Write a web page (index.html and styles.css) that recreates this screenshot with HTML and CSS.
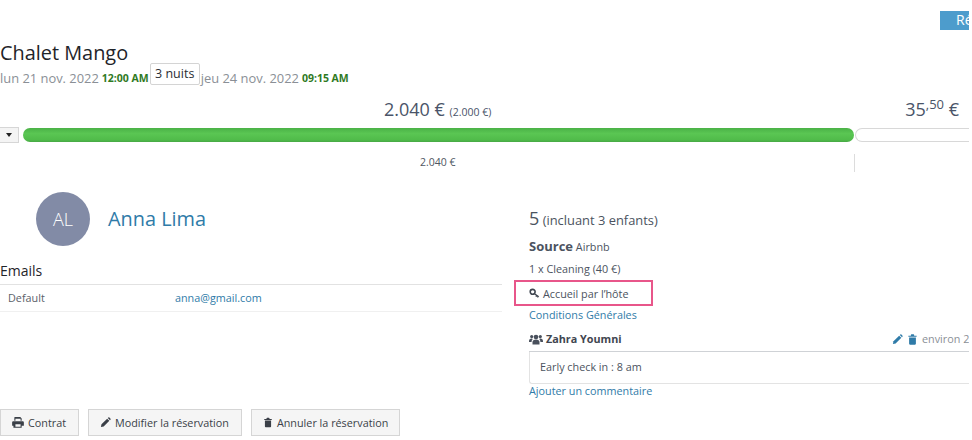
FILE: index.html
```html
<!DOCTYPE html>
<html lang="fr">
<head>
<meta charset="utf-8">
<title>Chalet Mango</title>
<link rel="stylesheet" href="styles.css">
</head>
<body>
<div class="page">
  <div class="topbar"><span class="top-btn">Réserver</span></div>
  <h1 class="title">Chalet Mango</h1>
  <div class="dates">
    <span>lun 21 nov. 2022</span> <b class="time">12:00 AM</b><span class="nights">3 nuits</span><span>jeu 24 nov. 2022</span> <b class="time">09:15 AM</b>
  </div>
  <div class="prices">
    <div class="price-main">2.040 € <small>(2.000 €)</small></div>
    <div class="price-extra">35<sup>,50</sup> €</div>
  </div>
  <div class="bar-row">
    <button class="caret" aria-label="menu"><span class="caret-glyph"></span></button>
    <div class="bar-green"></div>
    <div class="bar-empty"></div>
  </div>
  <div class="labels">
    <div class="label-main">2.040 €</div>
    <div class="label-rest"></div>
  </div>
  <div class="columns">
    <div class="left">
      <div class="guest">
        <div class="avatar">AL</div>
        <a class="guest-name">Anna Lima</a>
      </div>
      <h2 class="emails-title">Emails</h2>
      <div class="email-row">
        <span class="email-type">Default</span>
        <a class="link">anna@gmail.com</a>
      </div>
    </div>
    <div class="right">
      <div class="people"><span class="people-n">5</span> (incluant 3 enfants)</div>
      <div class="source"><b>Source</b> Airbnb</div>
      <div class="line">1 x Cleaning (40 €)</div>
      <div class="highlight">
        <svg class="ico" viewBox="0 0 12 12"><circle cx="4" cy="4.200" r="2.700" fill="none" stroke="#3f4650" stroke-width="1.700"/><path d="M6 6.200l4.600 3.400M8.400 8l-.9 1.300M10 9.200l-.8 1.100" fill="none" stroke="#3f4650" stroke-width="1.500"/></svg>
        <span>Accueil par l’hôte</span>
      </div>
      <a class="link line conditions">Conditions Générales</a>
      <div class="comment-head">
        <span class="author">
          <svg class="ico users" viewBox="0 0 14 11"><g fill="#49505c"><circle cx="7" cy="3" r="2.300"/><circle cx="2.700" cy="2.600" r="1.600"/><circle cx="11.300" cy="2.600" r="1.600"/><path d="M3.500 10.500V8c0-1.800 1.300-2.600 3.500-2.600s3.500.8 3.500 2.600v2.500z"/><path d="M0 7.500c0-2 1-2.900 2.600-2.900.6 0 1 .2 1.300.4-.9.7-1.300 1.700-1.300 3H0zM14 7.500c0-2-1-2.900-2.600-2.900-.6 0-1 .2-1.300.4.900.7 1.300 1.700 1.300 3H14z"/></g></svg>
          <b>Zahra Youmni</b>
        </span>
        <span class="meta">
          <svg class="ico" viewBox="0 0 12 12"><path class="blue" d="M1 11l.6-3L7.800 1.800l2.400 2.400L4 10.400z"/><path class="blue" d="M8.500 1.100l.7-.6c.3-.3.700-.3 1 0l1.300 1.300c.3.300.3.700 0 1l-.6.700z"/></svg>
          <svg class="ico" viewBox="0 0 12 12"><path class="blue" d="M4.200 1.800V1c0-.4.300-.7.700-.7h2.200c.4 0 .7.300.7.700v.8H10.500v1.200h-9V1.800zM2.300 3.700h7.400v7c0 .5-.4.900-.9.900H3.200c-.5 0-.9-.4-.9-.9z"/></svg>
          <span class="ago">environ 2 jours</span>
        </span>
      </div>
      <div class="comment">Early check in : 8 am</div>
      <a class="link add">Ajouter un commentaire</a>
    </div>
  </div>
  <div class="actions">
    <button class="btn btn-print">
      <svg class="ico" viewBox="0 0 13 12"><path fill="#3a3f47" d="M3 0h6l1.500 1.500V4H9.300V2H3.700v2H2.500V.5zM1.500 4.500h10c.8 0 1.400.6 1.400 1.400V9.500h-2.400v2.300h-9V9.500H.1V5.900c0-.8.600-1.400 1.400-1.400zM3.700 8v2.600h5.600V8z"/></svg>
      Contrat
    </button>
    <button class="btn">
      <svg class="ico" viewBox="0 0 12 12"><path fill="#3a3f47" d="M1 11l.6-3L7.800 1.800l2.400 2.400L4 10.400zM8.500 1.100l.7-.6c.3-.3.700-.3 1 0l1.300 1.300c.3.300.3.700 0 1l-.6.700z"/></svg>
      Modifier la réservation
    </button>
    <button class="btn btn-trash">
      <svg class="ico" viewBox="0 0 12 12"><path fill="#3a3f47" d="M4.200 1.800V1c0-.4.300-.7.700-.7h2.200c.4 0 .7.300.7.700v.8H10.500v1.200h-9V1.800zM2.300 3.700h7.400v7c0 .5-.4.900-.9.900H3.200c-.5 0-.9-.4-.9-.9z"/></svg>
      Annuler la réservation
    </button>
  </div>
</div>
</body>
</html>
```
FILE: styles.css
```css
* { box-sizing: border-box; }
html, body { margin: 0; padding: 0; background: #fff; overflow: hidden; }
body { font-family: "Open Sans", sans-serif; color: #4b5360; }
.page { width: 969px; height: 440px; overflow: hidden; display: flex; flex-direction: column; }
.topbar { display: flex; justify-content: flex-end; height: 42px; padding-top: 11px; }
.top-btn { width: 29px; height: 19px; background: #4d9ccc; color: #fff; font-size: 14px; line-height: 17px; padding-left: 16px; white-space: nowrap; overflow: hidden; }
.title { margin: 0; font-size: 19.900px; font-weight: 400; line-height: 22px; color: #1f2429; }
.dates { display: flex; align-items: center; height: 21px; margin-top: 3px; font-size: 12.900px; color: #8a8f96; white-space: pre; }
.time { color: #2f7a1f; font-size: 10.500px; font-weight: 700; margin-left: 3px; }
.nights { border: 1px solid #d4d4d4; border-radius: 2px; color: #2a2e33; font-size: 12.500px; line-height: 19px; height: 22px; width: 50px; text-align: center; margin: -7px 1px 0 1px; }
.prices { height: 39px; padding-top: 9px; display: flex; }
.price-main { margin-left: 384px; font-size: 18px; line-height: 25px; color: #4a5468; white-space: nowrap; }
.price-main small { font-size: 10.500px; }
.price-extra { margin-left: auto; margin-right: 10px; font-size: 18px; line-height: 25px; color: #4a5468; }
.price-extra sup { font-size: 13px; line-height: 0; }
.bar-row { display: flex; height: 16px; align-items: center; }
.caret { width: 19px; height: 16px; padding: 0; margin: 0 4px 0 0; border: 1px solid #d6d6d6; border-left: 0; background: #f4f4f4; display: flex; align-items: center; justify-content: center; }
.caret-glyph { width: 0; height: 0; border-left: 3.500px solid transparent; border-right: 3.500px solid transparent; border-top: 4px solid #222; }
.bar-green { width: 831px; height: 14px; border-radius: 7px; background: linear-gradient(#4bb247, #5ac653 40%, #50bb4a 85%, #47a845); }
.bar-empty { flex: 1; height: 14px; margin-left: 1px; border: 1px solid #d8d8d8; border-right: 0; border-radius: 7px 0 0 7px; background: #fff; }
.labels { display: flex; height: 28px; margin-top: 11px; font-size: 10.500px; color: #4f5662; }
.label-main { width: 854px; padding-left: 420px; line-height: 17px; }
.label-rest { height: 18px; border-left: 1px solid #dcdcdc; }
.columns { display: flex; height: 217px; margin-top: 10px; }
.left { width: 502px; }
.guest { display: flex; align-items: center; padding-left: 36px; height: 54px; }
.avatar { width: 54px; height: 54px; border-radius: 50%; background: #828ba6; color: #fff; font-size: 18px; font-weight: 300; line-height: 54px; text-align: center; }
.guest-name { margin: 0 0 2px 18px; font-size: 19.900px; color: #2f7ba8; }
.emails-title { margin: 15px 0 0; font-size: 14px; line-height: 20px; font-weight: 400; color: #1f2429; }
.email-row { display: flex; height: 28px; margin-top: 3px; padding-left: 8px; border-top: 1px solid #e2e2e2; border-bottom: 1px solid #f0f0f0; font-size: 10.800px; line-height: 25px; }
.email-type { width: 167px; color: #5a6069; }
.link { color: #2f7ba8; font-size: 10.800px; }
.right { margin-left: 27px; padding-top: 11px; flex: 1; min-width: 0; display: flex; flex-direction: column; align-items: stretch; font-size: 10.800px; }
.people { height: 34px; font-size: 12.900px; line-height: 22px; padding-top: 4px; }
.people-n { font-size: 18px; }
.source { height: 23px; line-height: 18px; }
.source b { font-size: 13px; }
.line { height: 23px; line-height: 18px; }
.highlight { display: flex; align-items: center; gap: 3px; width: 139px; height: 26px; margin: -3px 0 -1px -15px; border: 2px solid #e8568a; padding-left: 13px; }
.ico { width: 11px; height: 11px; flex: none; }
.conditions { display: block; height: 20px; margin-top: 0; line-height: 20px; }
.comment-head { display: flex; justify-content: space-between; height: 25px; border-bottom: 1px solid #cfd2d6; margin-top: 2px; line-height: 22px; align-items: center; white-space: nowrap; overflow: hidden; }
.author { display: flex; align-items: center; gap: 3px; }
.author b { color: #3f4650; }
.users { width: 14px; height: 11px; }
.meta { display: flex; align-items: center; gap: 4px; width: 77px; color: #8a8f96; flex: none; }
.blue { fill: #2f7ba8; }
.comment { height: 32px; padding-left: 10px; line-height: 30px; border: 1px solid #e3e3e3; border-top: 0; border-right: 0; border-radius: 0 0 0 3px; }
.add { margin-top: -2px; line-height: 18px; }
.actions { display: flex; gap: 9px; }
.btn { display: flex; align-items: center; gap: 4px; height: 27px; padding: 0 12px 0 11px; border: 1px solid #d5d5d5; background: #f5f5f5; font-family: "Open Sans", sans-serif; font-size: 10.800px; color: #3a3f47; white-space: nowrap; }
.btn-print .ico { width: 12px; }
.btn-trash { padding-right: 11px; }
.btn-trash .ico { width: 10px; }
```
